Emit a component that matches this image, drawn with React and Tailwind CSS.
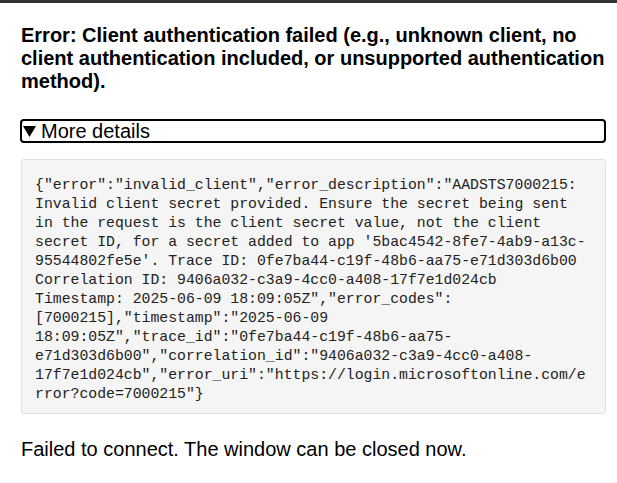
export default function App() {
  const code = `{"error":"invalid_client","error_description":"AADSTS7000215:
Invalid client secret provided. Ensure the secret being sent
in the request is the client secret value, not the client
secret ID, for a secret added to app '5bac4542-8fe7-4ab9-a13c-
95544802fe5e'. Trace ID: 0fe7ba44-c19f-48b6-aa75-e71d303d6b00
Correlation ID: 9406a032-c3a9-4cc0-a408-17f7e1d024cb
Timestamp: 2025-06-09 18:09:05Z","error_codes":
[7000215],"timestamp":"2025-06-09
18:09:05Z","trace_id":"0fe7ba44-c19f-48b6-aa75-
e71d303d6b00","correlation_id":"9406a032-c3a9-4cc0-a408-
17f7e1d024cb","error_uri":"https://login.microsoftonline.com/e
rror?code=7000215"}`;
  return (
    <div className="min-h-[483px] bg-white text-black font-['Liberation_Sans',Arial,sans-serif]">
      <div className="h-[3px] bg-[#333333]" />
      <div className="pl-[21px] pr-[11px] pt-[21px]">
        <h2 className="text-[20px] leading-[23px] font-bold">
          Error: Client authentication failed (e.g., unknown client, no client authentication included, or unsupported authentication method).
        </h2>
        <div className="mt-[26px] -ml-[1px] h-[24px] border-2 border-black rounded-[4px] flex items-center text-[20px] leading-[20px]">
          <svg width="13" height="11" viewBox="0 0 13 11" className="ml-[1px] mr-[5px] mt-[1px]">
            <polygon points="0,0 13,0 6.5,11" fill="#000" />
          </svg>
          <span>More details</span>
        </div>
        <pre className="mt-[16px] bg-[#f5f5f5] border border-[#e0e0e0] rounded-[3px] px-[13px] pt-[16px] pb-[9px] text-[14.8px] leading-[19px] text-[#222] whitespace-pre font-['Liberation_Mono','DejaVu_Sans_Mono',monospace]">
          {code}
        </pre>
        <p className="mt-[24px] text-[20px] leading-[23px]">Failed to connect. The window can be closed now.</p>
      </div>
    </div>
  );
}
